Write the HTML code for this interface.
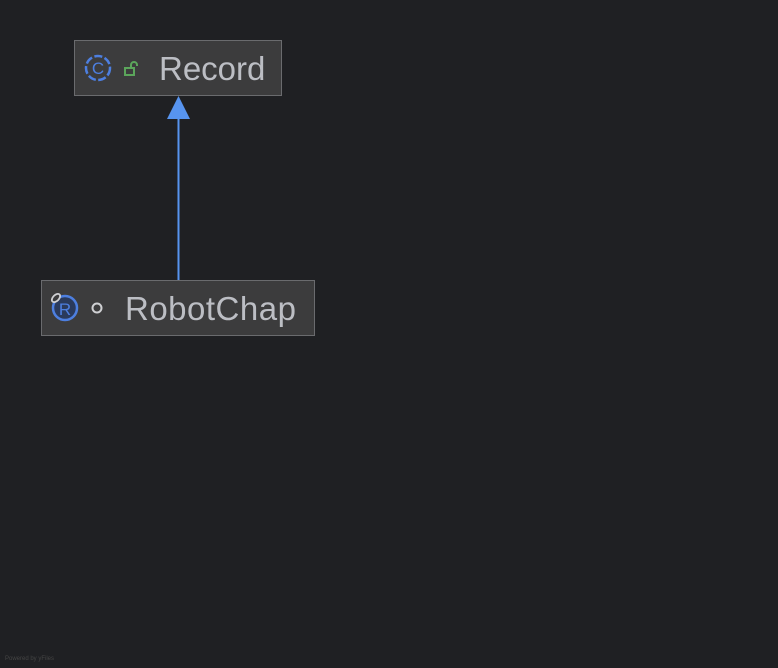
<!DOCTYPE html>
<html><head><style>
body{margin:0;width:778px;height:668px;background:#1f2023;position:relative;overflow:hidden;font-family:"Liberation Sans",sans-serif}
.box{position:absolute;background:#3c3c3d;border:1px solid #6a6b6e;box-sizing:border-box}
.t{position:absolute;color:#bcbec4;font-size:33px;line-height:1}
</style></head><body>
<svg width="778" height="668" style="position:absolute;left:0;top:0">
<line x1="178.5" y1="118" x2="178.5" y2="280" stroke="#5794ef" stroke-width="2"/>
<polygon points="178.5,96 167,119 190,119" fill="#5794ef"/>
</svg>
<div class="box" style="left:74px;top:40px;width:208px;height:56px"></div>
<svg width="778" height="668" style="position:absolute;left:0;top:0">
<circle cx="98" cy="68" r="12" fill="none" stroke="#4d7fe0" stroke-width="2.5" stroke-dasharray="8 2.5"/>
<text x="98" y="74" font-family="Liberation Sans" font-size="17" fill="#4d7fe0" text-anchor="middle">C</text>
<rect x="125" y="68" width="9" height="7" fill="none" stroke="#5ba55b" stroke-width="2"/>
<path d="M131 68 v-3 a3 3 0 0 1 6 0 v1" fill="none" stroke="#5ba55b" stroke-width="2"/>
</svg>
<div class="t" style="left:159px;top:52px">Record</div>
<div class="box" style="left:41px;top:280px;width:274px;height:56px"></div>
<svg width="778" height="668" style="position:absolute;left:0;top:0">
<circle cx="65" cy="308" r="12" fill="#2a3a5c" stroke="#4d7fe0" stroke-width="2.5"/>
<text x="65" y="315" font-family="Liberation Sans" font-size="17" fill="#4d7fe0" text-anchor="middle">R</text>
<ellipse cx="56" cy="298" rx="5" ry="3" transform="rotate(-45 56 298)" fill="#3c3c3d" stroke="#cfd0d3" stroke-width="1.8"/>
<circle cx="97" cy="308" r="4.5" fill="none" stroke="#cfd0d3" stroke-width="2"/>
</svg>
<div class="t" style="left:125px;top:292px;letter-spacing:0.5px">RobotChap</div>
<div style="position:absolute;left:5px;top:656px;font-size:6px;color:#444">Powered by yFiles</div>
</body></html>
